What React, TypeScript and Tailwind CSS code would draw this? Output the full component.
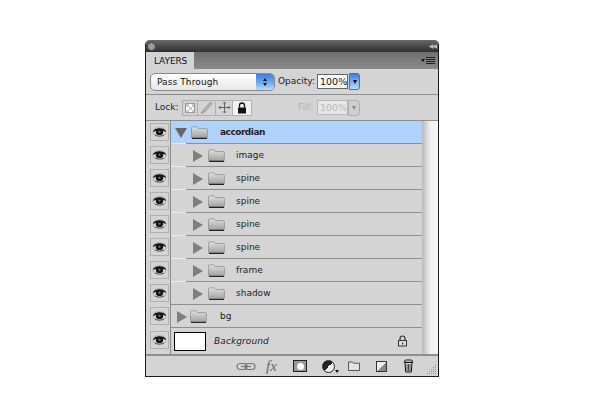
import React from "react";

const font = { fontFamily: '"DejaVu Sans", sans-serif' };

function Eye() {
  return (
    <svg width="15" height="12" viewBox="0 0 15 12" className="block">
      <ellipse cx="7.5" cy="6" rx="7" ry="4.8" fill="#a8a8a8" />
      <ellipse cx="7.5" cy="6" rx="6" ry="3.9" fill="#e2e2e2" />
      <path d="M0.8 5.4 C3.5 1.2 11.5 1.2 14.2 5.4 L12.4 5.6 C10 3.6 5 3.6 2.6 5.6Z" fill="#0d0d0d" />
      <ellipse cx="7.5" cy="5.9" rx="3.8" ry="3.1" fill="#141414" />
      <circle cx="7.5" cy="5.7" r="1" fill="#808080" />
      <path d="M3 9 C5.5 10.4 9.5 10.4 12 9" stroke="#4a4a4a" strokeWidth="0.9" fill="none" />
    </svg>
  );
}

function Folder() {
  return (
    <svg width="17" height="13" viewBox="0 0 17 13" className="block">
      <defs>
        <linearGradient id="fg" x1="0" y1="0" x2="0" y2="1">
          <stop offset="0" stopColor="#e0e0e0" />
          <stop offset="1" stopColor="#9e9e9e" />
        </linearGradient>
      </defs>
      <path d="M0.5 11 V2 Q0.5 0.8 1.7 0.8 H5.8 L7.2 2.5 H15 Q16.4 2.5 16.4 4 V11 Q16.4 12.2 15 12.2 H2 Q0.5 12.2 0.5 11Z" fill="url(#fg)" stroke="#8a8a8a" strokeWidth="0.7" />
      <path d="M1 12.4 H16" stroke="#222" strokeWidth="1.1" />
    </svg>
  );
}

function Right() {
  return <div className="w-0 h-0 border-y-[6px] border-y-transparent border-l-[10px] border-l-[#7f7f7f]" />;
}

function EyeCell({ tall }: { tall?: boolean }) {
  return (
    <div className={`w-[25px] shrink-0 border-r border-r-[#8a8a8a] flex items-start justify-end pr-[1px] ${tall ? "h-[26px] pt-[3px]" : "h-[23px] pt-[2px]"}`}>
      <div className="w-[19px] h-[18px] border border-[#b0b0b0] flex items-center justify-center"><Eye /></div>
    </div>
  );
}

function Layer({ name, indent, selected, full }: { name: string; indent?: boolean; selected?: boolean; full?: boolean }) {
  return (
    <div className="flex h-[23px]">
      <EyeCell />
      <div className="flex-1 flex flex-col">
        <div className={`flex-1 flex items-center pt-[1px] ${selected ? "bg-[#b1d2fd]" : ""}`}>
          {selected ? (
            <div className="ml-[4px] w-0 h-0 border-x-[6px] border-x-transparent border-t-[10px] border-t-[#666]" />
          ) : (
            <div className={indent ? "ml-[22px]" : "ml-[6px]"}><Right /></div>
          )}
          <div className={indent ? "ml-[5px]" : selected ? "ml-[4px]" : "ml-[3px]"}><Folder /></div>
          <span className={`${indent ? "ml-[11px]" : selected ? "ml-[12px]" : "ml-[13px]"} pt-[1px] text-[9px] text-[#222] ${selected ? "font-bold tracking-[-0.5px]" : ""}`}>{name}</span>
        </div>
        {full ? (
          <div className="h-[1px] bg-[#8f8f8f]" />
        ) : (
          <div className="h-[1px] flex">
            <div className="w-[15px] bg-[#ececec]" />
            <div className="flex-1 bg-[#8f8f8f]" />
          </div>
        )}
      </div>
    </div>
  );
}

export default function App() {
  const names = ["image", "spine", "spine", "spine", "spine", "frame"];
  return (
    <div className="w-[600px] h-[420px] bg-white pt-[40px] pl-[145px]" style={font}>
      <div className="w-[294px] h-[337px] border border-[#1c1c1c] border-t-0 rounded-t-[5px] rounded-b-[1px] bg-[#d4d4d4] flex flex-col overflow-hidden">
        {/* title bar */}
        <div className="h-[12px] shrink-0 bg-gradient-to-b from-[#6a6a6a] to-[#2f2f2f] flex items-center justify-between pl-[1px] pr-[2px]">
          <div className="w-[9px] h-[9px] rounded-full bg-[#9a9a9a] border border-[#444]" />
          <span className="text-[6px] leading-none text-[#bdbdbd] tracking-[-1px]">◀◀</span>
        </div>
        {/* tab bar */}
        <div className="h-[17px] shrink-0 bg-gradient-to-b from-[#6f6f6f] to-[#8a8a8a] flex items-stretch justify-between">
          <div className="w-[48px] bg-[#d4d4d4] pl-[8px] text-[9px] leading-[18px] text-[#111] tracking-[-0.1px]">LAYERS</div>
          <div className="flex items-center gap-[1px] pr-[3px]">
            <div className="w-0 h-0 border-x-[2.5px] border-x-transparent border-t-[3px] border-t-[#111]" />
            <div className="w-[9px] h-[7px] flex flex-col justify-between">
              <div className="h-[1px] bg-[#222]" /><div className="h-[1px] bg-[#222]" /><div className="h-[1px] bg-[#222]" /><div className="h-[1px] bg-[#222]" />
            </div>
          </div>
        </div>
        {/* blend row */}
        <div className="h-[26px] shrink-0 flex items-center pl-[4px] border-b border-b-[#8f8f8f]">
          <div className="w-[125px] h-[18px] rounded-[5px] border border-[#8a8a8a] flex overflow-hidden bg-gradient-to-b from-[#ffffff] to-[#e8e8e8]">
            <div className="flex-1 pl-[6px] text-[9px] tracking-[0.1px] leading-[17px] text-[#111]">Pass Through</div>
            <div className="w-[18px] bg-gradient-to-b from-[#3f7fdc] via-[#6aa5ec] to-[#b9dcfb] flex flex-col items-center justify-center gap-[2px]">
              <div className="w-0 h-0 border-x-[2.5px] border-x-transparent border-b-[3px] border-b-[#111]" />
              <div className="w-0 h-0 border-x-[2.5px] border-x-transparent border-t-[3px] border-t-[#111]" />
            </div>
          </div>
          <span className="ml-[3px] text-[9px] text-[#222] w-[39px]">Opacity:</span>
          <div className="w-[31px] h-[15px] bg-white border border-[#666] text-[9.5px] leading-[14px] pl-[2px] text-[#111]">100%</div>
          <div className="ml-[1px] w-[11px] h-[17px] rounded-r-[3px] bg-gradient-to-b from-[#3f7fdc] to-[#b9dcfb] border border-[#4a6fa8] flex items-center justify-center">
            <div className="w-0 h-0 border-x-[2.5px] border-x-transparent border-t-[4px] border-t-[#111]" />
          </div>
        </div>
        {/* lock row */}
        <div className="h-[25px] shrink-0 flex items-center pl-[9px]">
          <span className="text-[9px] text-[#222] w-[27px]">Lock:</span>
          <div className="w-[16px] h-[16px] border border-[#b0b0b0] flex items-center justify-center">
            <div className="w-[10px] h-[10px] border border-[#999] bg-[conic-gradient(#fff_25%,#c8c8c8_0_50%,#fff_0_75%,#c8c8c8_0)] bg-[length:6px_6px]" />
          </div>
          <div className="w-[18px] h-[16px] border border-[#b0b0b0] border-l-0 flex items-center justify-center">
            <svg width="13" height="13" viewBox="0 0 13 13"><path d="M1 12 C3 11 3.5 9 4.5 8 L10.5 1 L12 2.5 L6.5 9 C5 10.5 3 12 1 12Z" fill="#bdbdbd" stroke="#7c7c7c" strokeWidth="0.7" /></svg>
          </div>
          <div className="w-[17px] h-[16px] border border-[#b0b0b0] border-l-0 flex items-center justify-center">
            <svg width="13" height="13" viewBox="0 0 13 13" fill="none" stroke="#666" strokeWidth="1"><path d="M6.5 1V12M1 6.5H12" /><path d="M5 2.5L6.5 1L8 2.5M5 10.5L6.5 12L8 10.5M2.5 5L1 6.5L2.5 8M10.5 5L12 6.5L10.5 8" /></svg>
          </div>
          <div className="w-[19px] h-[16px] bg-[#f2f2f2] border border-[#b0b0b0] border-l-0 flex items-center justify-center">
            <svg width="10" height="12" viewBox="0 0 10 12"><path d="M2.5 5.5V3.5a2.5 2.5 0 0 1 5 0v2" fill="none" stroke="#111" strokeWidth="1.3" /><rect x="1" y="5.5" width="8" height="6" fill="#111" /></svg>
          </div>
          <span className="ml-[46px] text-[9px] text-[#b0b0b0] w-[19px]">Fill:</span>
          <div className="w-[31px] h-[15px] bg-[#e6e6e6] border border-[#b9b9b9] text-[9.5px] leading-[14px] pl-[2px] text-[#bbb]">100%</div>
          <div className="w-[12px] h-[16px] rounded-r-[3px] bg-[#cfcfcf] border border-[#b0b0b0] flex items-center justify-center">
            <div className="w-0 h-0 border-x-[2.5px] border-x-transparent border-t-[4px] border-t-[#888]" />
          </div>
        </div>
        {/* list */}
        <div className="h-[234px] shrink-0 flex border-t border-t-[#8f8f8f]">
          <div className="w-[276px] shrink-0 flex flex-col">
            <Layer name="accordian" selected />
            {names.map((n, i) => <Layer key={i} name={n} indent />)}
            <Layer name="shadow" indent full />
            <Layer name="bg" full />
            <div className="flex h-[26px]">
              <EyeCell tall />
              <div className="flex-1 flex items-center">
                <div className="ml-[3px] w-[32px] h-[19px] bg-white border border-black" />
                <span className="ml-[8px] pt-[1px] text-[9px] italic text-[#222] tracking-[0.1px]">Background</span>
                <svg width="11" height="12" viewBox="0 0 11 12" className="ml-[128px]"><path d="M3 5.5V3.5a2.5 2.5 0 0 1 5 0v2" fill="none" stroke="#333" strokeWidth="1.2" /><rect x="1.5" y="5.5" width="8" height="5.5" fill="#ddd" stroke="#333" /><rect x="5" y="7.5" width="1.2" height="2" fill="#333" /></svg>
              </div>
            </div>
          </div>
          <div className="flex-1 bg-gradient-to-r from-[#b9b9b9] via-[#eeeeee] to-[#f8f8f8]" />
        </div>
        {/* footer */}
        <div className="flex-1 border-t-2 border-t-[#8f8f8f] flex items-center relative pl-[90px]">
          <svg width="20" height="9" viewBox="0 0 20 9" fill="none" stroke="#777" strokeWidth="1.2"><rect x="1" y="1.5" width="10" height="6" rx="3" /><rect x="9" y="1.5" width="10" height="6" rx="3" /><path d="M5 4.5H15" /></svg>
          <span className="ml-[10px] w-[17px] text-[15px] leading-none italic text-[#666]" style={{ fontFamily: '"Liberation Serif", serif' }}>fx</span>
          <div className="ml-[10px] w-[14px] h-[12px] bg-[#999] border border-[#222] flex items-center justify-center"><div className="w-[7px] h-[7px] rounded-full bg-white" /></div>
          <div className="ml-[15px] w-[13px] h-[13px] rounded-full border border-[#222] bg-[linear-gradient(135deg,#222_50%,#eee_50%)]" />
          <div className="w-0 h-0 mt-[10px] border-x-[2px] border-x-transparent border-t-[3px] border-t-[#111]" />
          <div className="ml-[9px]"><svg width="12" height="10" viewBox="0 0 12 10" className="block"><path d="M0.5 9.5V1H4.5L5.5 2.2H11.5V9.5Z" fill="#e2e2e2" stroke="#333" strokeWidth="0.8" /></svg></div>
          <div className="ml-[16px] w-[11px] h-[11px] border border-[#333] bg-[linear-gradient(135deg,#eee_55%,#888_55%)]" />
          <svg width="11" height="14" viewBox="0 0 11 14" className="ml-[16px]"><path d="M1 3.2L2.5 1H8.5L10 3.2Z" fill="#eee" stroke="#111" strokeWidth="1" /><path d="M2 3.5H9L8.3 13H2.7Z" fill="#ddd" stroke="#111" /><path d="M4 5V12M5.5 5V12M7 5V12" stroke="#222" strokeWidth="0.8" /></svg>
          <svg width="11" height="11" viewBox="0 0 11 11" className="absolute right-[1px] bottom-[1px]" fill="#8f8f8f">
            <rect x="9" y="1" width="1" height="1" /><rect x="7" y="3" width="1" height="1" /><rect x="9" y="3" width="1" height="1" /><rect x="5" y="5" width="1" height="1" /><rect x="7" y="5" width="1" height="1" /><rect x="9" y="5" width="1" height="1" /><rect x="3" y="7" width="1" height="1" /><rect x="5" y="7" width="1" height="1" /><rect x="7" y="7" width="1" height="1" /><rect x="9" y="7" width="1" height="1" /><rect x="1" y="9" width="1" height="1" /><rect x="3" y="9" width="1" height="1" /><rect x="5" y="9" width="1" height="1" /><rect x="7" y="9" width="1" height="1" /><rect x="9" y="9" width="1" height="1" />
          </svg>
        </div>
      </div>
    </div>
  );
}
